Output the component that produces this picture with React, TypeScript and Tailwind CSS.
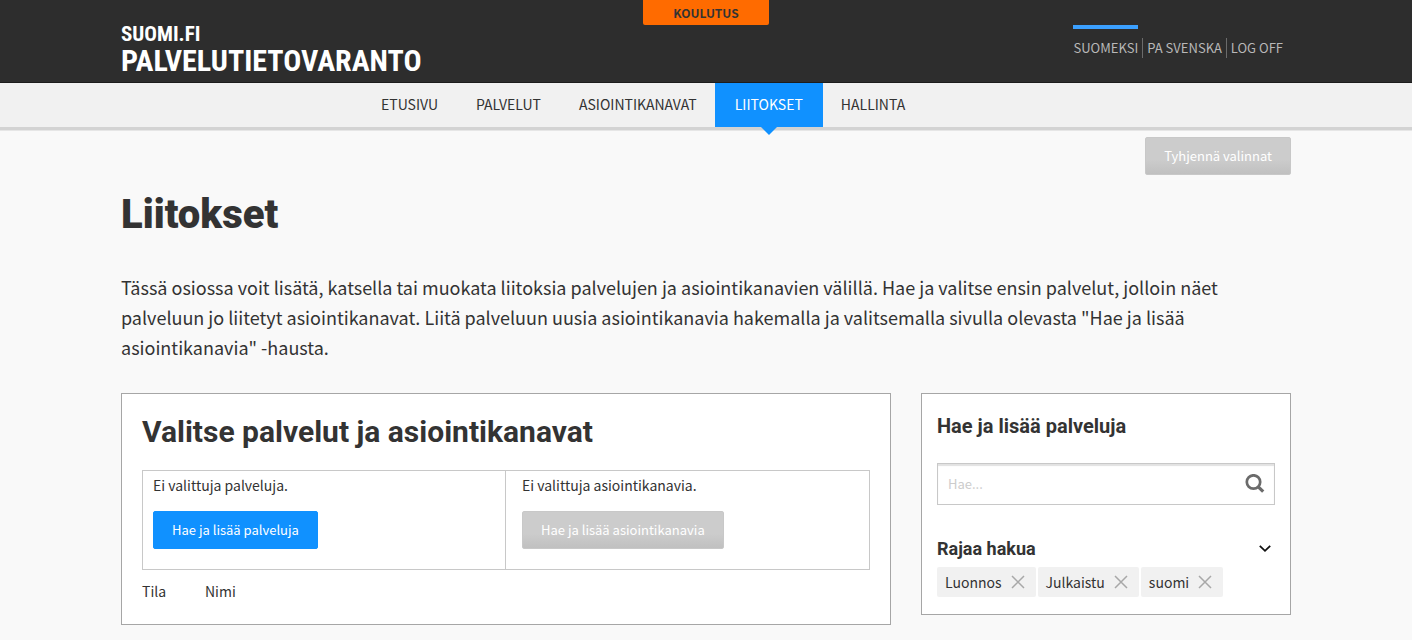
import React, { useState } from 'react';
import { clsx } from 'clsx';

interface ActionButtonProps {
  children: React.ReactNode;
  disabled?: boolean;
}

function ActionButton({ children, disabled }: ActionButtonProps) {
  return (
    <button
      type="button"
      disabled={disabled}
      className={clsx(
        'h-[38px] rounded-xs border px-[18px] text-[13px] leading-5 text-white',
        disabled
          ? 'border-[#c8c8c8] bg-linear-to-b from-[#cccccc] from-60% to-[#c0c0c0]'
          : 'cursor-pointer border-[#1091ff] bg-[#1091ff] hover:bg-[#0b7fe3]'
      )}
    >
      {children}
    </button>
  );
}

function Header() {
  return (
    <header className="border-b border-[#1c1c1c] bg-[#2d2d2d]">
      <div className="relative mx-auto flex h-[82px] max-w-[1170px] items-start justify-between">
        <a href="#" className="pt-[22px] font-['Roboto_Condensed','Noto_Sans_CJK_SC',sans-serif] font-bold text-white">
          <span className="block text-[21px] leading-6">SUOMI.FI</span>
          <span className="block text-[30px] leading-[30px]">PALVELUTIETOVARANTO</span>
        </a>
        <div className="absolute left-1/2 top-0 h-[25px] w-[126px] -translate-x-1/2 rounded-b-xs bg-[#ff6b00] text-center text-[12px] font-bold leading-[26px] text-[#333333]">
          KOULUTUS
        </div>
        <div className="flex pr-2 pt-[25px] text-[13px] leading-5 text-[#b8b8b8]">
          <a href="#" className="border-t-4 border-[#3ba0ff] pt-[9px]">SUOMEKSI</a>
          <a href="#" className="ml-1 mt-[13px] h-5 border-l border-[#6b6b6b] pl-1">PA SVENSKA</a>
          <a href="#" className="ml-1 mt-[13px] h-5 border-l border-[#6b6b6b] pl-1">LOG OFF</a>
        </div>
      </div>
    </header>
  );
}

const navItems = ['ETUSIVU', 'PALVELUT', 'ASIOINTIKANAVAT', 'LIITOKSET', 'HALLINTA'];

function MainNav() {
  return (
    <nav className="border-b border-[#e6e6e6]">
      <div className="border-b-3 border-[#d3d3d3] bg-[#f1f1f1]">
        <div className="mx-auto flex max-w-[1170px] gap-[38px] pl-[260px] text-[14px] leading-[42px]">
          {navItems.map((item) =>
            item === 'LIITOKSET' ? (
              <a key={item} href="#" aria-current="page" className="relative -mx-5 bg-[#1091ff] px-5 pb-[2px] text-white">
                {item}
                <span className="absolute left-1/2 top-full h-0 w-0 -translate-x-1/2 border-x-8 border-t-8 border-x-transparent border-t-[#1091ff]" />
              </a>
            ) : (
              <a key={item} href="#" className="pb-[2px]">{item}</a>
            )
          )}
        </div>
      </div>
    </nav>
  );
}

function SelectionCard() {
  return (
    <section className="border border-[#a6a6a6] bg-white px-5 pb-[23px] pt-5">
      <h2 className="font-[Roboto,sans-serif] text-[30px] font-bold leading-9">Valitse palvelut ja asiointikanavat</h2>
      <div className="mt-5 grid grid-cols-2 border border-[#c8c8c8]">
        <div className="border-r border-[#c8c8c8] pb-5 pl-[10px] pt-1">
          <p className="mb-4 text-[14px] leading-5">Ei valittuja palveluja.</p>
          <ActionButton>Hae ja lisää palveluja</ActionButton>
        </div>
        <div className="pb-5 pl-4 pt-1">
          <p className="mb-4 text-[14px] leading-5">Ei valittuja asiointikanavia.</p>
          <ActionButton disabled>Hae ja lisää asiointikanavia</ActionButton>
        </div>
      </div>
      <table className="mt-[11px] w-full text-left text-[14px] leading-5">
        <thead>
          <tr>
            <th className="w-[63px] p-0 font-normal">Tila</th>
            <th className="p-0 font-normal">Nimi</th>
          </tr>
        </thead>
      </table>
    </section>
  );
}

function SearchCard() {
  const [query, setQuery] = useState('');
  const [filters, setFilters] = useState(['Luonnos', 'Julkaistu', 'suomi']);

  const removeFilter = (name: string) => {
    setFilters((current) => current.filter((f) => f !== name));
  };

  return (
    <section className="border border-[#a6a6a6] bg-white px-[15px] pb-[17px] pt-5">
      <h3 className="font-[Roboto,sans-serif] text-[20px] font-bold leading-6">Hae ja lisää palveluja</h3>
      <div className="mt-[25px] flex h-[42px] items-center border border-[#c8c8c8] pr-[9px] shadow-[inset_0_2px_1px_#e2e2e2]">
        <input
          type="text"
          aria-label="Hae"
          placeholder="Hae..."
          value={query}
          onChange={(e) => setQuery(e.target.value)}
          className="min-w-0 flex-1 bg-transparent px-[10px] text-[13px] leading-5 outline-none placeholder:text-[#cccccc]"
        />
        <button type="button" aria-label="Hae" className="cursor-pointer">
          <svg width="20" height="20" viewBox="0 0 20 20" fill="none" stroke="#6b6b6b">
            <circle cx="8.5" cy="8" r="6.7" strokeWidth="2.7" />
            <path d="M13.3 12.8L18.2 17.7" strokeWidth="3.2" />
          </svg>
        </button>
      </div>
      <button type="button" className="mt-8 flex w-full cursor-pointer items-center justify-between pr-1 text-left">
        <span className="font-[Roboto,sans-serif] text-[18px] font-bold leading-6">Rajaa hakua</span>
        <svg width="12" height="8" viewBox="0 0 12 8" fill="none" stroke="#111111" strokeWidth="1.8">
          <path d="M0.8 0.8L6 5.8L11.2 0.8" />
        </svg>
      </button>
      <ul className="mt-[6px] flex flex-wrap gap-[2px] text-[14px] leading-[30px]">
        {filters.map((name) => (
          <li key={name} className="flex items-center gap-[9px] rounded-xs bg-[#f1f1f1] pl-2 pr-[11px]">
            {name}
            <button type="button" aria-label={`Poista ${name}`} onClick={() => removeFilter(name)} className="cursor-pointer">
              <svg width="14" height="14" viewBox="0 0 14 14" stroke="#a8a8a8" strokeWidth="1.5">
                <path d="M1 1L13 13M13 1L1 13" />
              </svg>
            </button>
          </li>
        ))}
      </ul>
    </section>
  );
}

export default function App() {
  return (
    <div className="min-h-screen bg-[#f9f9f9] font-['Noto_Sans_CJK_SC',sans-serif] text-[#333333]">
      <Header />
      <MainNav />
      <main className="mx-auto max-w-[1170px] pb-4 pt-[6px]">
        <div className="flex justify-end">
          <ActionButton disabled>Tyhjennä valinnat</ActionButton>
        </div>
        <h1 className="mt-4 font-[Roboto,sans-serif] text-[40px] font-black leading-[48px]">Liitokset</h1>
        <p className="mt-[33px] text-[18px] leading-[30px]">
          Tässä osiossa voit lisätä, katsella tai muokata liitoksia palvelujen ja asiointikanavien välillä. Hae ja valitse
          ensin palvelut, jolloin näet palveluun jo liitetyt asiointikanavat. Liitä palveluun uusia asiointikanavia
          hakemalla ja valitsemalla sivulla olevasta "Hae ja lisää asiointikanavia" -hausta.
        </p>
        <div className="mt-[31px] grid grid-cols-[minmax(0,1fr)_370px] items-start gap-[30px]">
          <SelectionCard />
          <SearchCard />
        </div>
      </main>
    </div>
  );
}
